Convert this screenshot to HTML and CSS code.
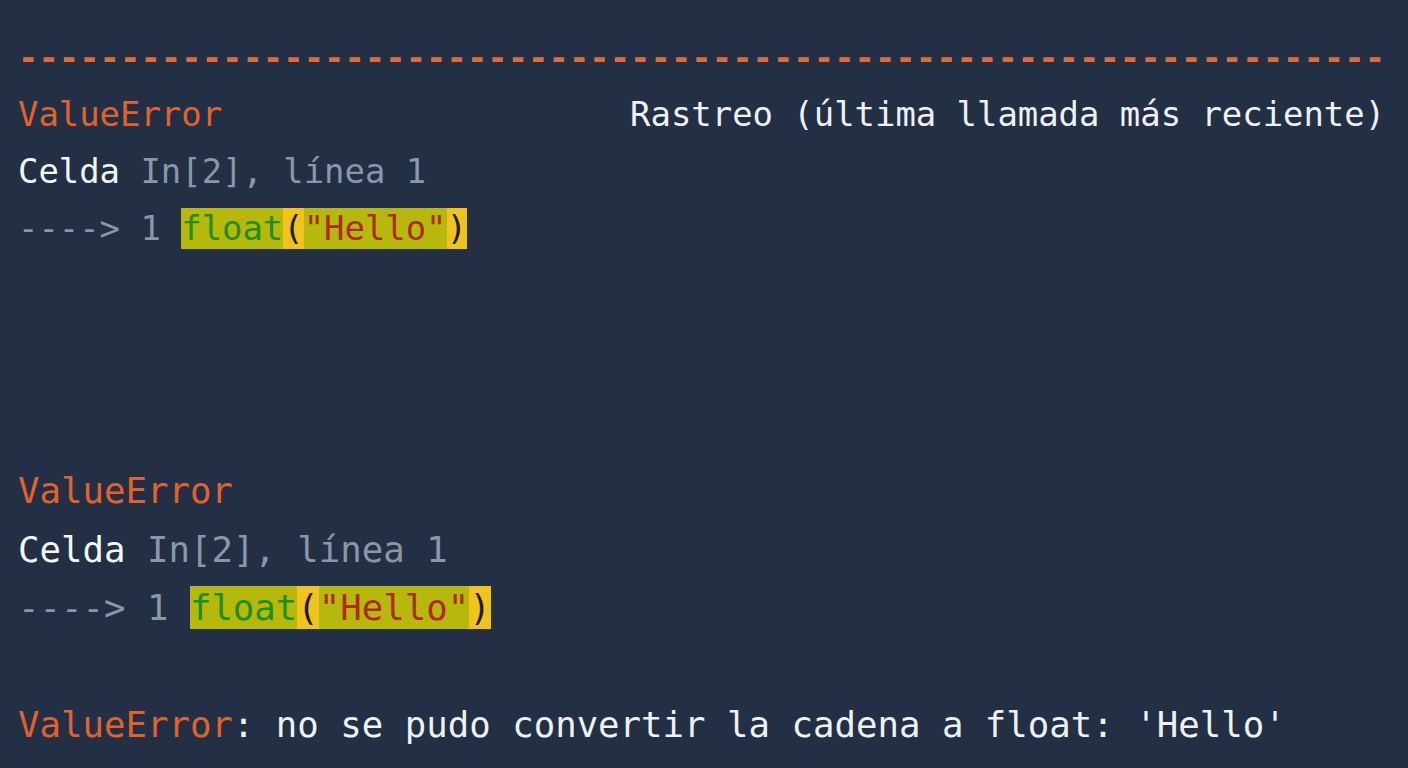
FILE: index.html
```html
<!DOCTYPE html>
<html lang="es">
<head>
<meta charset="utf-8">
<title>ValueError</title>
<link rel="stylesheet" href="styles.css">
</head>
<body>
<main class="output">
  <pre class="tb tb-top"><span class="red rule">-------------------------------------------------------------------</span>
<span class="red">ValueError</span>                    Rastreo (última llamada más reciente)
<span class="cell">Celda</span> <span class="dim">In[2], línea 1</span>
<span class="dim">----&gt; 1 </span><span class="hl"><span class="fn">float</span><span class="paren">(</span><span class="str">"Hello"</span><span class="paren">)</span></span></pre>
  <pre class="tb tb-bottom"><span class="red">ValueError</span>
<span class="cell">Celda</span> <span class="dim">In[2], línea 1</span>
<span class="dim">----&gt; 1 </span><span class="hl"><span class="fn">float</span><span class="paren">(</span><span class="str">"Hello"</span><span class="paren">)</span></span>

<span class="red">ValueError</span>: no se pudo convertir la cadena a float: 'Hello'</pre>
</main>
</body>
</html>
```
FILE: styles.css
```css
html, body {
  margin: 0;
  padding: 0;
  background: #222f45;
  width: 1408px;
  height: 768px;
  overflow: hidden;
}

.output {
  display: flex;
  flex-direction: column;
  padding: 29px 0 0 18px;
}

.tb {
  margin: 0;
  font-family: "DejaVu Sans Mono", "Liberation Mono", monospace;
  color: #eef2f7;
  white-space: pre;
}

.tb-top {
  font-size: 33.9px;
  line-height: 57px;
}

.tb-bottom {
  margin-top: 205px;
  font-size: 35.7px;
  line-height: 58.5px;
}

.red { color: #e2622c; }
.rule { font-weight: bold; color: #df6a3a; }
.dim { color: #8b97a7; }
.cell { color: #f3f6fa; }

.hl {
  background: #b6b80c;
  padding: 1px 0;
}
.fn { color: #1c8f1c; }
.str { color: #b02a10; }
.paren {
  background: #f2c31a;
  color: #1d1d1d;
  padding: 1px 0;
}
```
